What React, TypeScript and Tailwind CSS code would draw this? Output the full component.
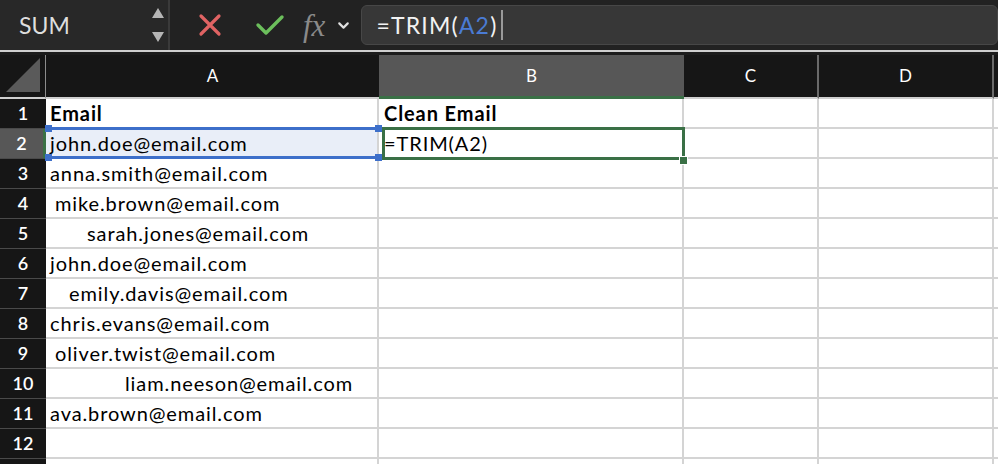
import { ChevronDown } from 'lucide-react';

type Row = { n: number; a: string; b?: string; bold?: boolean; pad: string };

const rows: Row[] = [
  { n: 1, a: 'Email', b: 'Clean Email', bold: true, pad: 'pl-[4px]' },
  { n: 2, a: 'john.doe@email.com', b: '=TRIM(A2)', pad: 'pl-[4px]' },
  { n: 3, a: 'anna.smith@email.com', pad: 'pl-[4px]' },
  { n: 4, a: 'mike.brown@email.com', pad: 'pl-[9px]' },
  { n: 5, a: 'sarah.jones@email.com', pad: 'pl-[41px]' },
  { n: 6, a: 'john.doe@email.com', pad: 'pl-[4px]' },
  { n: 7, a: 'emily.davis@email.com', pad: 'pl-[23px]' },
  { n: 8, a: 'chris.evans@email.com', pad: 'pl-[4px]' },
  { n: 9, a: 'oliver.twist@email.com', pad: 'pl-[9px]' },
  { n: 10, a: 'liam.neeson@email.com', pad: 'pl-[79px]' },
  { n: 11, a: 'ava.brown@email.com', pad: 'pl-[4px]' },
  { n: 12, a: '', pad: 'pl-[4px]' },
];

function Spinner() {
  return (
    <svg width="14" height="36" viewBox="0 0 14 36" className="text-[#b5b5b5]">
      <path d="M7 1 L13 11 L1 11 Z" fill="currentColor" />
      <path d="M7 35 L13 25 L1 25 Z" fill="currentColor" />
    </svg>
  );
}

export default function App() {
  return (
    <div className="relative w-[998px] h-[464px] overflow-hidden bg-white font-['Lato',sans-serif]">
      {/* formula bar */}
      <div className="flex h-[50px] bg-[#222222]">
        <div className="w-[170px] h-full bg-[#282828] border-r-2 border-[#3a3a3a] flex items-center justify-between pl-[19px] pr-[3px]">
          <span className="text-[23px] text-[#dedede] leading-none">SUM</span>
          <Spinner />
        </div>
        <div className="flex items-center">
          <svg width="24" height="24" viewBox="0 0 24 24" className="ml-[28px]">
            <path d="M3 3 L21 21 M21 3 L3 21" stroke="#e06363" strokeWidth="3.2" strokeLinecap="round" />
          </svg>
          <svg width="30" height="24" viewBox="0 0 30 24" className="ml-[33px]">
            <path d="M3 12 L11 20 L27 4" stroke="#6cbf5c" strokeWidth="3.4" strokeLinecap="round" strokeLinejoin="round" fill="none" />
          </svg>
          <span className="ml-[18px] font-['Liberation_Serif',serif] italic text-[31px] text-[#8a8a8a] leading-none">fx</span>
          <ChevronDown size={17} strokeWidth={3} className="ml-[10px] text-[#e0e0e0]" />
        </div>
        <div className="flex-1 ml-[9px] my-[5px] rounded-md bg-[#373737] border border-[#474747] flex items-center pl-[14px]">
          <span className="text-[23px] text-[#f2f2f2] leading-none tracking-[1.2px]">
            =TRIM(<span className="text-[#4a7bd4]">A2</span>)
          </span>
          <span className="ml-[3px] w-[2px] h-[30px] bg-[#9a9a9a]" />
        </div>
      </div>
      <div className="h-[2px] bg-[#cfcfcf]" />
      <div className="h-[3px] bg-[#1c1c1c]" />

      {/* column headers */}
      <div className="flex h-[44px] bg-[#161616] text-white text-[17px]">
        <div className="w-[46px] border-r border-[#8c8c8c] border-b-2 border-b-[#cfcfcf] relative">
          <svg width="34" height="34" viewBox="0 0 34 34" className="absolute right-[5px] bottom-[5px]">
            <path d="M34 0 L34 34 L0 34 Z" fill="#5a5a5a" />
          </svg>
        </div>
        <div className="w-[333px] flex items-center justify-center border-b-2 border-[#cfcfcf]">A</div>
        <div className="w-[305px] flex items-center justify-center bg-[#575757] border-b-[3px] border-[#3a7046]">B</div>
        <div className="w-[135px] flex items-center justify-center border-r-2 border-[#6a6a6a] border-b-2 border-b-[#cfcfcf]">C</div>
        <div className="w-[175px] flex items-center justify-center border-r-2 border-[#6a6a6a] border-b-2 border-b-[#cfcfcf]">D</div>
        <div className="flex-1 border-b-2 border-[#cfcfcf]" />
      </div>

      {/* rows */}
      {rows.map((r) => (
        <div key={r.n} className="flex h-[30px] text-[20px] text-black">
          <div
            className={
              r.n === 2
                ? 'w-[46px] bg-[#575757] border-r-[3px] border-[#3a7046] border-b border-b-[#4a4a4a] flex items-center justify-center text-white text-[18px] font-semibold'
                : 'w-[46px] bg-[#161616] border-b border-[#4a4a4a] flex items-center justify-center text-white text-[18px] font-semibold'
            }
          >
            {r.n}
          </div>
          <div
            className={
              (r.n === 2 ? 'bg-[#e9eef8] ' : '') +
              'w-[333px] border-r-2 border-b-2 border-[#d4d4d4] flex items-center whitespace-nowrap tracking-[0.9px] ' +
              r.pad +
              (r.bold ? ' font-bold' : '')
            }
          >
            {r.a}
          </div>
          <div
            className={
              'w-[305px] border-r-2 border-b-2 border-[#d4d4d4] flex items-center pl-[5px] whitespace-nowrap tracking-[0.9px]' +
              (r.bold ? ' font-bold' : '')
            }
          >
            {r.b}
          </div>
          <div className="w-[135px] border-r-2 border-b-2 border-[#d4d4d4]" />
          <div className="w-[175px] border-r-2 border-b-2 border-[#d4d4d4]" />
          <div className="flex-1 border-b-2 border-[#d4d4d4]" />
        </div>
      ))}
      {/* partially visible next row */}
      <div className="flex h-[30px]">
        <div className="w-[46px] bg-[#161616]" />
        <div className="w-[333px] border-r-2 border-[#d4d4d4]" />
        <div className="w-[305px] border-r-2 border-[#d4d4d4]" />
        <div className="w-[135px] border-r-2 border-[#d4d4d4]" />
        <div className="w-[175px] border-r-2 border-[#d4d4d4]" />
      </div>

      {/* selection overlays */}
      <div className="absolute left-[48px] top-[127px] w-[330px] h-[32px] border-y-[3px] border-[#3d6fca]" />
      <div className="absolute left-[45px] top-[125px] w-[7px] h-[7px] bg-[#3d6fca]" />
      <div className="absolute left-[45px] top-[154px] w-[7px] h-[7px] bg-[#3d6fca]" />
      <div className="absolute left-[382px] top-[127px] w-[303px] h-[33px] border-[3px] border-[#3a7046]" />
      <div className="absolute left-[375px] top-[125px] w-[7px] h-[7px] bg-[#3d6fca]" />
      <div className="absolute left-[375px] top-[154px] w-[7px] h-[7px] bg-[#3d6fca]" />
      <div className="absolute left-[679px] top-[156px] w-[9px] h-[9px] bg-[#3a7046] border border-white" />
    </div>
  );
}
